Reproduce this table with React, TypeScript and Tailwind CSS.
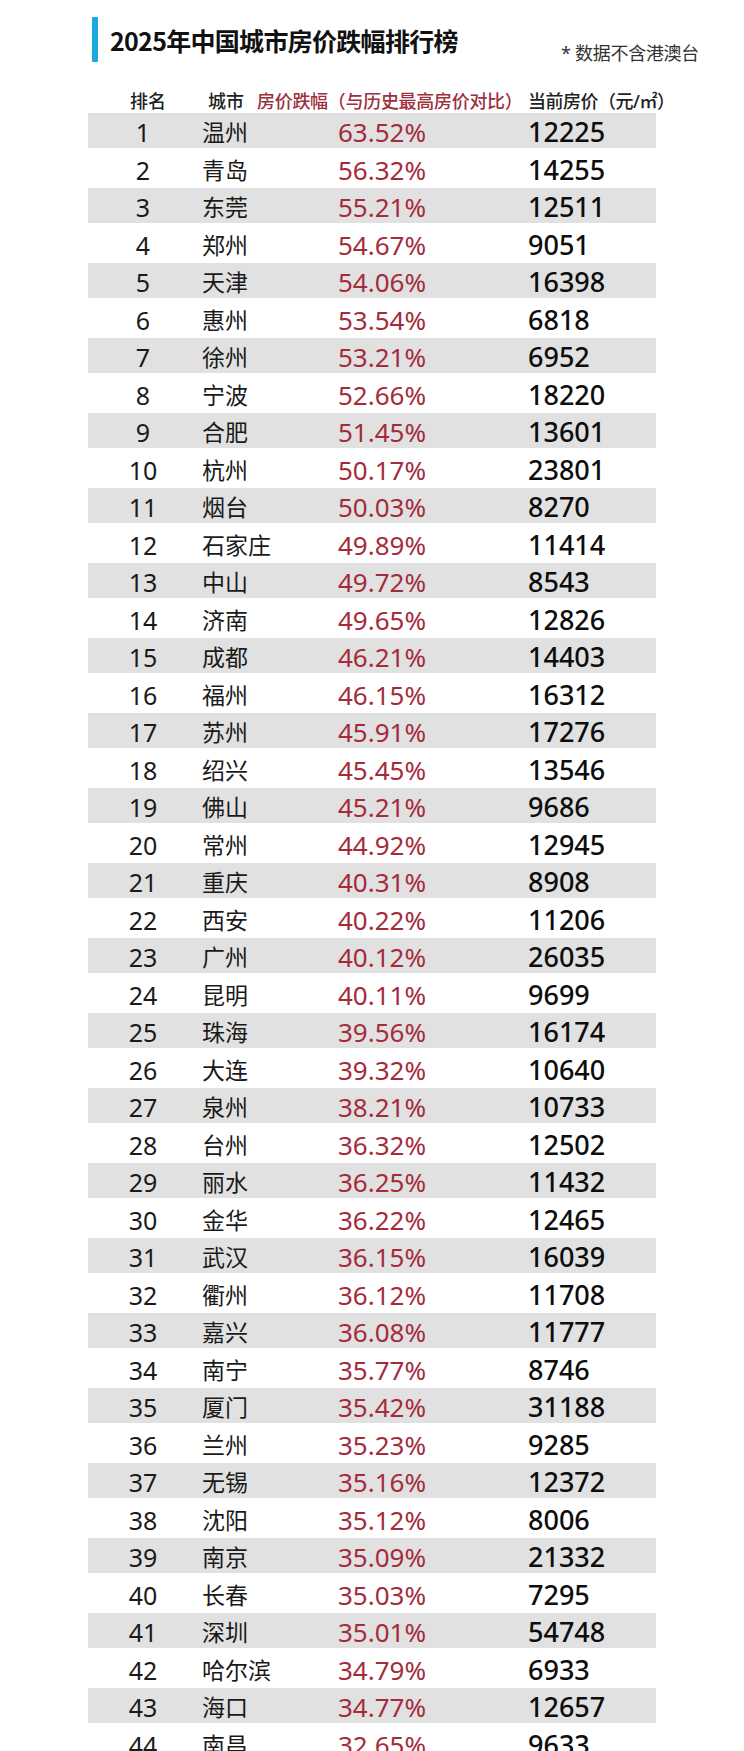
const rows: [string, string, string][] = [
  ['温州', '63.52%', '12225'],
  ['青岛', '56.32%', '14255'],
  ['东莞', '55.21%', '12511'],
  ['郑州', '54.67%', '9051'],
  ['天津', '54.06%', '16398'],
  ['惠州', '53.54%', '6818'],
  ['徐州', '53.21%', '6952'],
  ['宁波', '52.66%', '18220'],
  ['合肥', '51.45%', '13601'],
  ['杭州', '50.17%', '23801'],
  ['烟台', '50.03%', '8270'],
  ['石家庄', '49.89%', '11414'],
  ['中山', '49.72%', '8543'],
  ['济南', '49.65%', '12826'],
  ['成都', '46.21%', '14403'],
  ['福州', '46.15%', '16312'],
  ['苏州', '45.91%', '17276'],
  ['绍兴', '45.45%', '13546'],
  ['佛山', '45.21%', '9686'],
  ['常州', '44.92%', '12945'],
  ['重庆', '40.31%', '8908'],
  ['西安', '40.22%', '11206'],
  ['广州', '40.12%', '26035'],
  ['昆明', '40.11%', '9699'],
  ['珠海', '39.56%', '16174'],
  ['大连', '39.32%', '10640'],
  ['泉州', '38.21%', '10733'],
  ['台州', '36.32%', '12502'],
  ['丽水', '36.25%', '11432'],
  ['金华', '36.22%', '12465'],
  ['武汉', '36.15%', '16039'],
  ['衢州', '36.12%', '11708'],
  ['嘉兴', '36.08%', '11777'],
  ['南宁', '35.77%', '8746'],
  ['厦门', '35.42%', '31188'],
  ['兰州', '35.23%', '9285'],
  ['无锡', '35.16%', '12372'],
  ['沈阳', '35.12%', '8006'],
  ['南京', '35.09%', '21332'],
  ['长春', '35.03%', '7295'],
  ['深圳', '35.01%', '54748'],
  ['哈尔滨', '34.79%', '6933'],
  ['海口', '34.77%', '12657'],
  ['南昌', '32.65%', '9633'],
];

const App = () => {
  return (
    <div className="w-[744px] h-[1751px] overflow-hidden bg-white font-['Noto_Sans','Noto_Sans_CJK_SC',sans-serif] text-[#161616]">
      <div className="px-[88px]">
        {/* title */}
        <div className="h-[88px] flex justify-between items-start">
          <div className="mt-[17px] ml-[4px] flex items-center gap-[12px]">
            <div className="w-[6px] h-[45px] bg-[#1ba9e1] rounded-[1px]" />
            <h1 className="font-['Noto_Sans_CJK_SC',sans-serif] text-[25px] leading-[30px] font-bold tracking-[-0.7px] text-[#111]">
              2025年中国城市房价跌幅排行榜
            </h1>
          </div>
          <div className="mt-[42px] -mr-[43px] text-[18px] leading-[22px] tracking-[-0.3px] text-[#333]">* 数据不含港澳台</div>
        </div>

        {/* header */}
        <div className="h-[25px] flex items-center whitespace-nowrap text-[18px] leading-[22px] font-medium text-[#222]">
          <span className="shrink-0 ml-[42px] w-[78px]">排名</span>
          <span className="shrink-0 w-[49px]">城市</span>
          <span className="shrink-0 w-[271px] text-[#9e2f3e] tracking-[-0.3px]">房价跌幅（与历史最高房价对比）</span>
          <span className="shrink-0 tracking-[-0.5px]">当前房价（元/㎡）</span>
        </div>

        {/* rows */}
        <div className="flex flex-col gap-[2.5px]">
          {rows.map(([city, drop, price], i) => (
            <div
              key={i}
              className={`h-[35px] flex items-center pt-[3px] ${i % 2 === 0 ? 'bg-[#e1e1e1]' : ''}`}
            >
              <span className="w-[110px] text-center text-[25px] leading-[30px] text-[#1a1a1a]">{i + 1}</span>
              <span className="w-[140px] pl-[4px] text-[23px] leading-[30px] text-[#1a1a1a]">{city}</span>
              <span className="w-[190px] text-[26px] leading-[30px] text-[#a52b3b]">{drop}</span>
              <span className="text-[27px] leading-[30px] font-medium text-[#0d0d0d]">{price}</span>
            </div>
          ))}
        </div>
      </div>
    </div>
  );
};

export default App;
